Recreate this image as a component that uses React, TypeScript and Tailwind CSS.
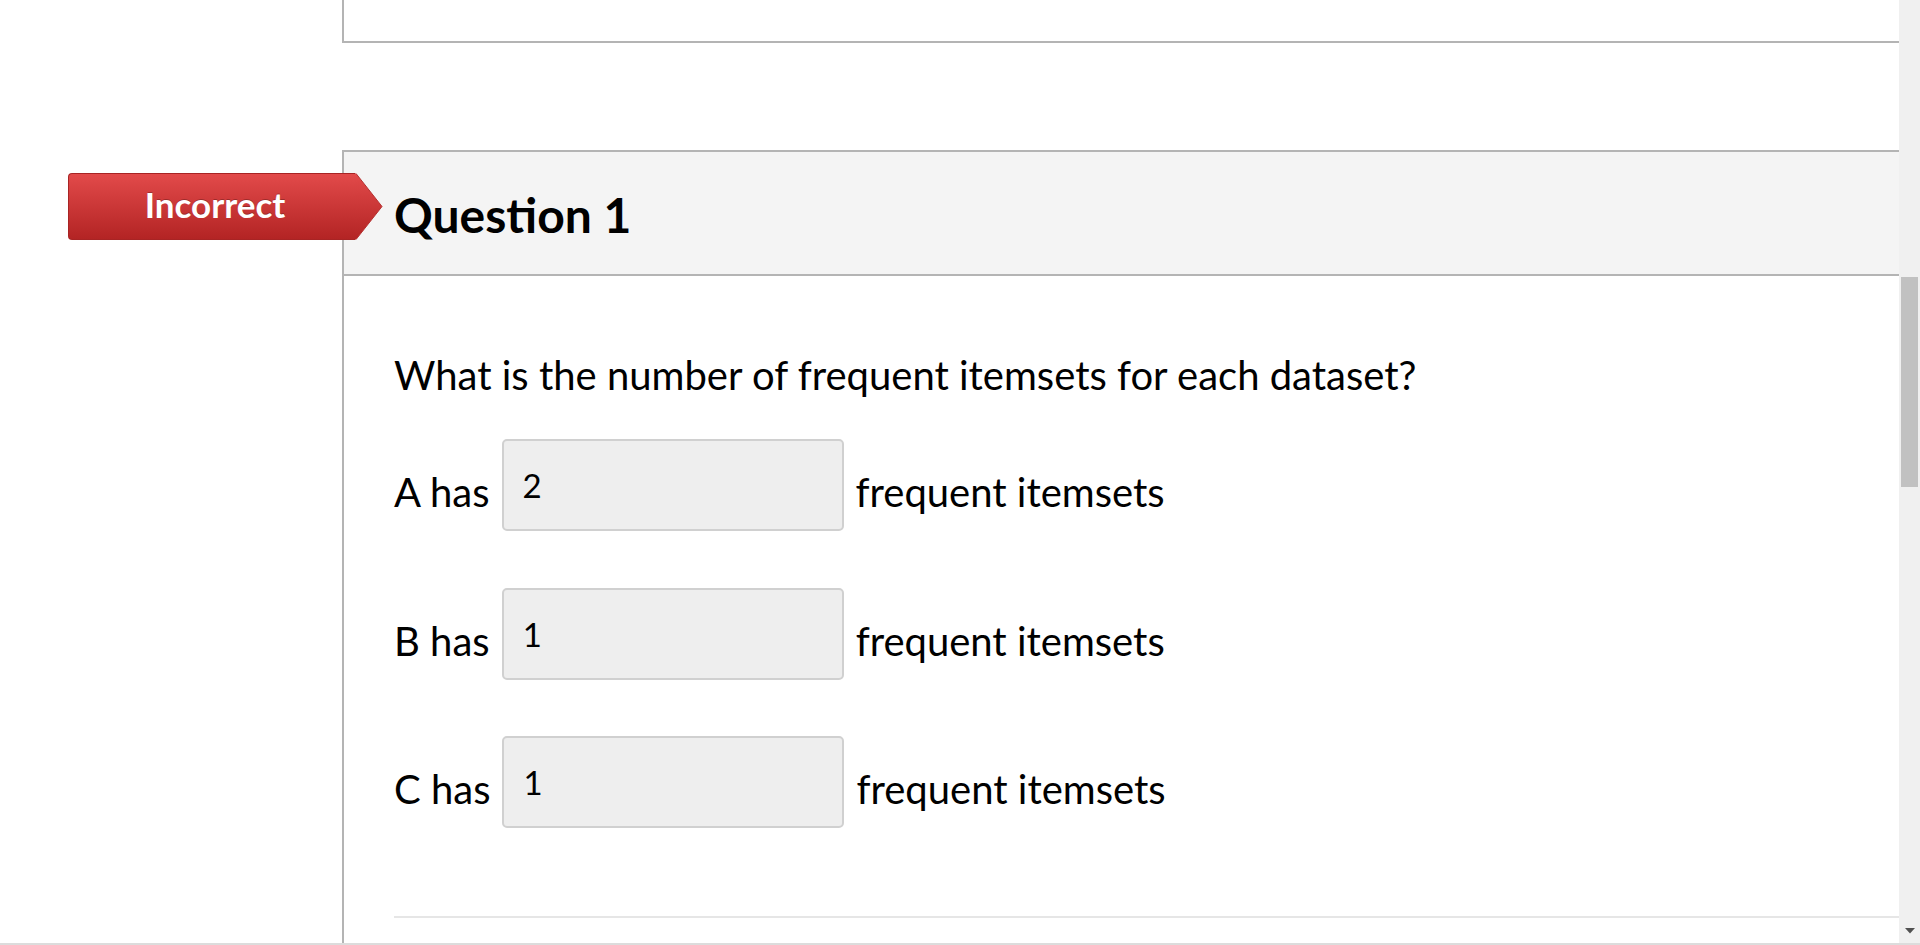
import React from 'react';

const font = "font-['Lato','Liberation_Sans',sans-serif]";

// 결과 배지 (오답 표시)
function ResultBadge() {
  return (
    <div className="absolute left-[-276px] top-[21px] flex h-[67px]">
      <div className="flex w-[287px] items-center justify-center rounded-l-[4px] border border-r-0 border-[#a82424] bg-[linear-gradient(to_bottom,#e24a4a,#b32424)] pb-[6px] pl-[6px]">
        <span className="text-[35px] font-bold leading-[42px] text-white [text-shadow:0_-1px_0_rgba(0,0,0,0.25)]">
          Incorrect
        </span>
      </div>
      <svg width="28" height="67" viewBox="0 0 28 67" className="block">
        <defs>
          <linearGradient id="badgeArrow" x1="0" y1="0" x2="0" y2="1">
            <stop offset="0" stopColor="#e24a4a" />
            <stop offset="1" stopColor="#b32424" />
          </linearGradient>
        </defs>
        <path d="M0 0.5 L1 0.5 L27 33.5 L1 66.5 L0 66.5 Z" fill="url(#badgeArrow)" />
        <path d="M1 0.5 L27 33.5 L1 66.5" fill="none" stroke="#b53030" strokeWidth="1" />
      </svg>
    </div>
  );
}

function AnswerRow({ label, value, className }: { label: string; value: string; className: string }) {
  return (
    <div className={`flex items-start gap-3 ${className}`}>
      <span className="mt-[29px] text-[40px] leading-[48px] text-black">{label}</span>
      <input
        readOnly
        value={value}
        className={`h-[92px] w-[342px] rounded-[5px] border-2 border-[#d0d0d0] bg-[#eeeeee] px-[19px] text-[33px] text-black outline-none ${font}`}
      />
      <span className="mt-[29px] text-[40px] leading-[48px] text-black">frequent itemsets</span>
    </div>
  );
}

export default function App() {
  return (
    <div className={`flex h-[945px] w-full flex-col overflow-hidden bg-white ${font}`}>
      <div className="flex h-[943px] min-h-0">
        {/* 본문 영역 */}
        <div className="flex min-w-0 flex-1 flex-col">
          <div className="ml-[342px] h-[43px] border-b-2 border-l-2 border-[#b4b4b4] bg-white" />

          <div className="relative ml-[342px] mt-[107px] flex-1 border-l-2 border-t-2 border-[#b4b4b4]">
            <ResultBadge />

            <div className="flex h-[124px] items-center border-b-2 border-[#b4b4b4] bg-[#f4f4f4] pl-[50px] pt-[3px]">
              <h2 className="text-[48px] font-bold leading-[56px] text-black">Question 1</h2>
            </div>

            <div className="bg-white pl-[50px] pt-[75px]">
              <p className="text-[40px] leading-[48px] text-black">
                What is the number of frequent itemsets for each dataset?
              </p>

              <AnswerRow label="A has" value="2" className="mt-[40px]" />
              <AnswerRow label="B has" value="1" className="mt-[57px]" />
              <AnswerRow label="C has" value="1" className="mt-[56px]" />

              <div className="mt-[88px] h-[2px] bg-[#e6e6e6]" />
            </div>
          </div>
        </div>

        {/* 스크롤바 */}
        <div className="flex w-[21px] flex-col justify-between bg-[#f0f0f0]">
          <div className="mx-[2px] mt-[277px] h-[210px] bg-[#c1c1c1]" />
          <div className="flex justify-center pb-[9px]">
            <svg width="10" height="6" viewBox="0 0 10 6">
              <path d="M0 0 L10 0 L5 5.5 Z" fill="#505050" />
            </svg>
          </div>
        </div>
      </div>
      <div className="h-[2px] bg-[#dcdcdc]" />
    </div>
  );
}
